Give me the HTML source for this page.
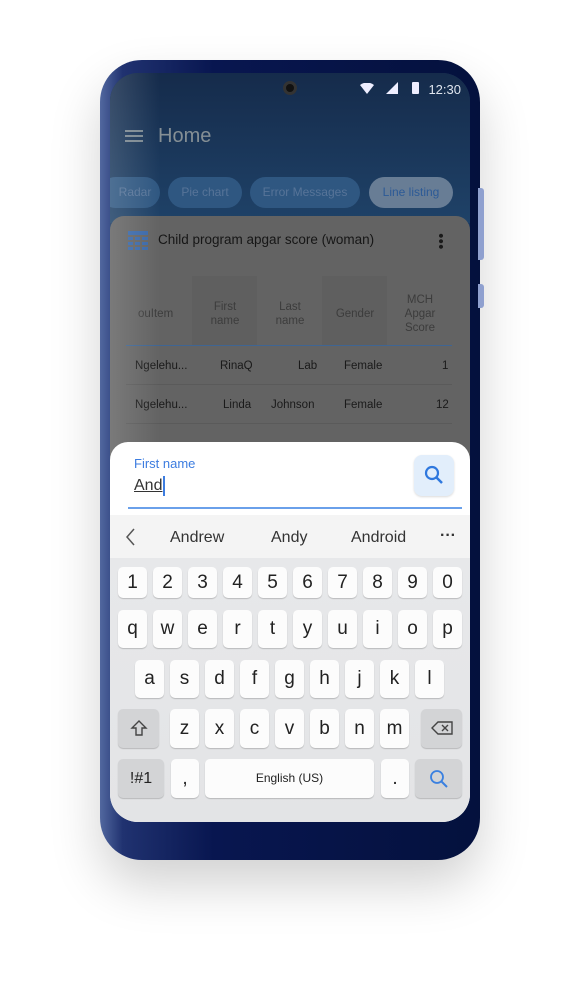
<!DOCTYPE html>
<html><head><meta charset="utf-8"><style>
*{box-sizing:border-box;margin:0;padding:0}
body{width:584px;height:1000px;background:#fff;position:relative;overflow:hidden;font-family:"Liberation Sans",sans-serif}
.phone{position:absolute;left:100px;top:60px;width:380px;height:800px;border-radius:42px;background:linear-gradient(90deg,#52689f 0,#203270 6%,#081650 30%,#04113d 100%);box-shadow:0 25px 50px rgba(0,0,0,.18)}
.btn{position:absolute;left:478px;width:6px;background:#8fa0cf;border-radius:0 3px 3px 0}
.screen{position:absolute;left:110px;top:73px;width:360px;height:749px;border-radius:28px;overflow:hidden;background:#1a3760}
.top{position:absolute;left:0;top:0;width:360px;height:150px;background:linear-gradient(180deg,#152b4b,#1f4268)}
.cam{position:absolute;left:173px;top:8px;width:14px;height:14px;border-radius:50%;background:#111;border:3px solid #333}
.time{position:absolute;right:9px;top:9px;color:#dfe5ee;font-size:13px}
.home{position:absolute;left:48px;top:52px;color:#858f95;font-size:20px}
.burger{position:absolute;left:15px;top:57px;width:18px;height:12px;border-top:2px solid #7a8790;border-bottom:2px solid #7a8790}
.burger:after{content:"";position:absolute;left:0;top:3px;width:18px;height:2px;background:#7a8790}
.chip{position:absolute;top:104px;height:31px;border-radius:16px;background:#2f5781;color:#577498;font-size:12px;line-height:31px;text-align:center}
.card{position:absolute;left:0;top:143px;width:360px;height:300px;border-radius:14px 14px 0 0;background:#636363}
.ct{position:absolute;left:48px;top:16px;color:#161616;font-size:13.5px}
.th{position:absolute;color:#3c3c3c;font-size:11.5px;text-align:center;line-height:14px}
.td{position:absolute;color:#1a1a1a;font-size:11.5px}
.kb{position:absolute;left:0;top:369px;width:360px;height:380px;border-radius:18px 18px 0 0;background:#fff;overflow:hidden}
.sug{position:absolute;left:0;top:73px;width:360px;height:43px;background:#f4f4f4;font-size:16px;color:#333}
.keys{position:absolute;left:0;top:116px;width:360px;height:264px;background:linear-gradient(180deg,#e7e8ea,#e3e4e6)}
.k{position:absolute;background:#fcfcfc;border-radius:5px;box-shadow:0 1px 1px rgba(0,0,0,.2);font-size:19px;color:#222;text-align:center}
.g{background:#d3d4d6}
</style></head><body>
<div class="phone"></div>
<div class="btn" style="top:188px;height:72px"></div>
<div class="btn" style="top:284px;height:24px"></div>
<div class="screen">
 <div class="top"></div>
 <div class="cam"></div>
 <svg style="position:absolute;left:250px;top:10px" width="14" height="12"><path d="M0 2 Q7 -3 14 2 L7 11Z" fill="#eef"/></svg>
 <svg style="position:absolute;left:276px;top:9px" width="12" height="12"><path d="M12 0 L12 12 L0 12Z" fill="#eef"/></svg>
 <div style="position:absolute;left:302px;top:9px;width:7px;height:12px;background:#eef;border-radius:1px"></div>
 <div class="time">12:30</div>
 <div class="burger"></div>
 <div class="home">Home</div>
 <div class="chip" style="left:-10px;width:60px;padding-left:10px">Radar</div>
 <div class="chip" style="left:58px;width:74px">Pie chart</div>
 <div class="chip" style="left:140px;width:110px">Error Messages</div>
 <div class="chip" style="left:259px;width:84px;background:#687d95;color:#2c5a96">Line listing</div>
 <div class="card">
  <svg style="position:absolute;left:18px;top:15px" width="20" height="19"><rect width="20" height="4" fill="#3a68a8"/><g fill="#3a68a8"><rect y="6" width="5" height="3"/><rect x="7" y="6" width="5" height="3"/><rect x="14" y="6" width="6" height="3"/><rect y="11" width="5" height="3"/><rect x="7" y="11" width="5" height="3"/><rect x="14" y="11" width="6" height="3"/><rect y="16" width="5" height="3"/><rect x="7" y="16" width="5" height="3"/><rect x="14" y="16" width="6" height="3"/></g></svg>
  <div class="ct">Child program apgar score (woman)</div>
  <div style="position:absolute;left:329px;top:17px;width:4px;height:16px;background:radial-gradient(circle,#1a1a1a 1.8px,transparent 2.2px) 0 0/4px 5.5px"></div>
  <div style="position:absolute;left:82px;top:60px;width:65px;height:70px;background:#5f5f5f"></div>
  <div style="position:absolute;left:212px;top:60px;width:65px;height:70px;background:#5f5f5f"></div>
  <div class="th" style="left:28px;top:91px">ouItem</div>
  <div class="th" style="left:90px;top:84px;width:50px">First<br>name</div>
  <div class="th" style="left:155px;top:84px;width:50px">Last<br>name</div>
  <div class="th" style="left:220px;top:91px;width:50px">Gender</div>
  <div class="th" style="left:285px;top:77px;width:50px">MCH<br>Apgar<br>Score</div>
  <div style="position:absolute;left:16px;top:129px;width:326px;height:1px;background:#3f6593"></div>
  <div class="td" style="left:25px;top:144px">Ngelehu...</div><div class="td" style="left:110px;top:144px">RinaQ</div><div class="td" style="left:188px;top:144px">Lab</div><div class="td" style="left:234px;top:144px">Female</div><div class="td" style="left:332px;top:144px">1</div>
  <div style="position:absolute;left:16px;top:168px;width:326px;height:1px;background:#5a5a5a"></div>
  <div class="td" style="left:25px;top:183px">Ngelehu...</div><div class="td" style="left:113px;top:183px">Linda</div><div class="td" style="left:161px;top:183px">Johnson</div><div class="td" style="left:234px;top:183px">Female</div><div class="td" style="left:326px;top:183px">12</div>
  <div style="position:absolute;left:16px;top:207px;width:326px;height:1px;background:#5a5a5a"></div>
 </div>
 <div style="position:absolute;left:0;top:0;width:50px;height:749px;background:linear-gradient(90deg,rgba(255,255,255,.15),rgba(255,255,255,0))"></div>
 <div class="kb">
  <div style="position:absolute;left:24px;top:14px;color:#3d7de0;font-size:13px">First name</div>
  <div style="position:absolute;left:24px;top:35px;color:#333;font-size:16px;text-decoration:underline">And</div>
  <div style="position:absolute;left:53px;top:34px;width:2px;height:20px;background:#3d7de0"></div>
  <div style="position:absolute;left:304px;top:13px;width:40px;height:41px;border-radius:8px;background:#e2eefb;box-shadow:0 1px 2px rgba(0,0,0,.15)"></div>
  <svg style="position:absolute;left:314px;top:23px" width="20" height="20"><circle cx="8" cy="8" r="6" fill="none" stroke="#2f78de" stroke-width="2.2"/><path d="M12.5 12.5 L18 18" stroke="#2f78de" stroke-width="2.5"/></svg>
  <div style="position:absolute;left:18px;top:65px;width:334px;height:2px;background:#6aa0ea"></div>
  <div class="sug">
   <svg style="position:absolute;left:15px;top:13px" width="10" height="18"><path d="M9 1 L2 9 L9 17" fill="none" stroke="#555" stroke-width="1.5"/></svg>
   <span style="position:absolute;left:60px;top:14px">Andrew</span>
   <span style="position:absolute;left:161px;top:14px">Andy</span>
   <span style="position:absolute;left:241px;top:14px">Android</span>
   <span style="position:absolute;left:330px;top:12px;font-size:16px;font-weight:bold">···</span>
  </div>
  <div class="keys" id="keys"></div>
 </div>
</div>
<script>
var K=document.getElementById('keys'),h='';
function key(x,y,w,hh,t,c,fs){h+='<div class="k '+(c||'')+'" style="left:'+(x-110)+'px;top:'+(y-558)+'px;width:'+w+'px;height:'+hh+'px;line-height:'+hh+'px;'+(fs?'font-size:'+fs+'px':'')+'">'+t+'</div>'}
'1234567890'.split('').forEach(function(c,i){key(118+i*35,567,29,31,c)});
'qwertyuiop'.split('').forEach(function(c,i){key(118+i*35,610,29,38,c)});
'asdfghjkl'.split('').forEach(function(c,i){key(135+i*35,660,29,38,c)});
'zxcvbnm'.split('').forEach(function(c,i){key(170+i*35,709,29,39,c)});
key(118,709,41,39,'<svg width="18" height="18" style="margin-top:10px"><path d="M9 2 L2 9 L6 9 L6 16 L12 16 L12 9 L16 9Z" fill="none" stroke="#444" stroke-width="1.4"/></svg>','g');
key(421,709,41,39,'<svg width="22" height="14" style="margin-top:12px"><path d="M7 1 L21 1 L21 13 L7 13 L1 7Z" fill="none" stroke="#444" stroke-width="1.4"/><path d="M11 4 L17 10 M17 4 L11 10" stroke="#444" stroke-width="1.4"/></svg>','g');
key(118,759,46,39,'!#1','g',16);
key(171,759,28,39,',');
key(205,759,169,39,'English (US)','',12);
key(381,759,28,39,'.');
key(415,759,47,39,'<svg width="20" height="20" style="margin-top:10px"><circle cx="8" cy="8" r="6" fill="none" stroke="#3a80e0" stroke-width="1.8"/><path d="M12.5 12.5 L18 18" stroke="#3a80e0" stroke-width="2"/></svg>','g');
K.innerHTML=h;
</script>
</body></html>
